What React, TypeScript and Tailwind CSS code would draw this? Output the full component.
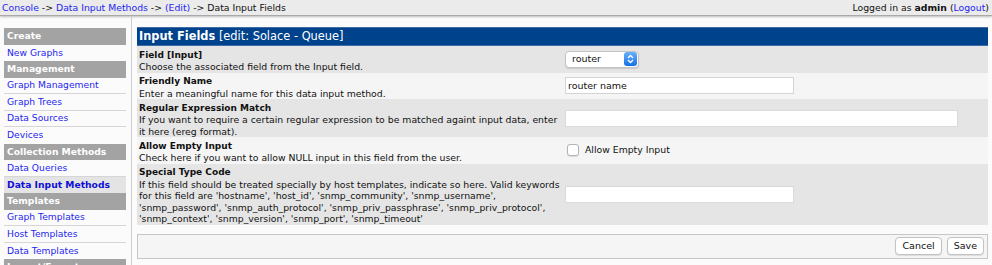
const MENU: { title: string; items: { label: string; active?: boolean }[] }[] = [
  { title: "Create", items: [{ label: "New Graphs" }] },
  {
    title: "Management",
    items: [
      { label: "Graph Management" },
      { label: "Graph Trees" },
      { label: "Data Sources" },
      { label: "Devices" },
    ],
  },
  {
    title: "Collection Methods",
    items: [{ label: "Data Queries" }, { label: "Data Input Methods", active: true }],
  },
  {
    title: "Templates",
    items: [
      { label: "Graph Templates" },
      { label: "Host Templates" },
      { label: "Data Templates" },
    ],
  },
  { title: "Import/Export", items: [{ label: "Import Templates" }, { label: "Export Templates" }] },
];

function Row({
  title,
  desc,
  dark,
  children,
}: {
  title: string;
  desc: string;
  dark?: boolean;
  children: React.ReactNode;
}) {
  return (
    <div className={`flex ${dark ? "bg-[#e5e5e5]" : "bg-[#f5f5f5]"}`}>
      <div className="w-[426px] shrink-0 px-[2px] pt-[3.5px] leading-[11.5px]">
        <div className="font-bold">{title}</div>
        <div className="text-[9.3px]">{desc}</div>
      </div>
      <div className="flex flex-1 items-center pl-[2px]">{children}</div>
    </div>
  );
}

export default function App() {
  return (
    <div className="h-[265px] overflow-hidden bg-[#fbfbfb] font-['DejaVu_Sans',sans-serif] text-[9px] text-[#111]">
      {/* top bar */}
      <div className="flex h-[16px] items-center justify-between border-b border-[#a9a9a9] bg-[#ebebeb] pl-[2px] pr-[3px] text-[9.3px] shadow-[0_1px_2px_rgba(0,0,0,0.25)]">
        <div>
          <a className="text-[#1f1ff0]">Console</a> -&gt;{" "}
          <a className="text-[#1f1ff0]">Data Input Methods</a> -&gt;{" "}
          <a className="text-[#1f1ff0]">(Edit)</a> -&gt; Data Input Fields
        </div>
        <div>
          Logged in as <b>admin</b> (<a className="text-[#1f1ff0]">Logout</a>)
        </div>
      </div>

      <div className="flex">
        {/* sidebar */}
        <div className="w-[132px] shrink-0 border-r border-[#cccccc] pl-[4px] pr-[5px] pt-[12px] text-[9.2px]">
          {MENU.map((g) => (
            <div key={g.title}>
              <div className="flex h-[16.5px] items-center bg-[#a3a3a3] px-[3px] font-bold text-white">
                {g.title}
              </div>
              {g.items.map((it, i) => (
                <div
                  key={it.label}
                  className={`flex h-[16.5px] items-center px-[3px] ${
                    i < g.items.length - 1 ? "border-b border-[#d6d6d6]" : ""
                  } ${it.active ? "bg-[#e4e4e4] font-bold text-[#1010d8]" : "text-[#1f1ff0]"}`}
                >
                  {it.label}
                </div>
              ))}
            </div>
          ))}
        </div>

        {/* main */}
        <div className="ml-[5px] w-[851px] shrink-0 pt-[11px]">
          <div className="flex h-[19px] items-center border-y border-[#3e6aa6] bg-[#00428c] px-[2px] text-[11.4px] text-white">
            <span className="font-bold">Input Fields</span>
            <span>&nbsp;[edit: Solace - Queue]</span>
          </div>

          <Row dark title="Field [Input]" desc="Choose the associated field from the Input field.">
            <div className="flex h-[17px] w-[74px] items-center justify-between rounded-[4px] border border-[#c4c4c4] bg-white pl-[6px] pr-px shadow-[0_1px_1px_rgba(0,0,0,0.12)]">
              <span className="text-[9.5px]">router</span>
              <span className="flex h-[14px] w-[13px] items-center justify-center rounded-[3px] bg-gradient-to-b from-[#69b1fa] to-[#0d6fe6]">
                <svg width="7" height="10" viewBox="0 0 7 10" fill="none" stroke="white" strokeWidth="1.3">
                  <path d="M1 4 L3.5 1.5 L6 4" />
                  <path d="M1 6 L3.5 8.5 L6 6" />
                </svg>
              </span>
            </div>
          </Row>

          <Row title="Friendly Name" desc="Enter a meaningful name for this data input method.">
            <div className="flex h-[17px] w-[229px] items-center border border-[#d4d4d4] bg-white px-[2px] text-[9.5px]">
              router name
            </div>
          </Row>

          <Row
            dark
            title="Regular Expression Match"
            desc="If you want to require a certain regular expression to be matched againt input data, enter it here (ereg format)."
          >
            <div className="h-[17px] w-[393px] border border-[#dadada] bg-white" />
          </Row>

          <Row title="Allow Empty Input" desc="Check here if you want to allow NULL input in this field from the user.">
            <div className="flex items-center gap-[6px] pl-[2px] text-[9.3px]">
              <span className="h-[12px] w-[12px] rounded-[3px] border border-[#b4b4b4] bg-white shadow-[0_1px_1px_rgba(0,0,0,0.1)]" />
              Allow Empty Input
            </div>
          </Row>

          <Row
            dark
            title="Special Type Code"
            desc="If this field should be treated specially by host templates, indicate so here. Valid keywords for this field are 'hostname', 'host_id', 'snmp_community', 'snmp_username', 'snmp_password', 'snmp_auth_protocol', 'snmp_priv_passphrase', 'snmp_priv_protocol', 'snmp_context', 'snmp_version', 'snmp_port', 'snmp_timeout'"
          >
            <div className="h-[17px] w-[229px] border border-[#dadada] bg-white" />
          </Row>

          <div className="mt-[9px] flex h-[25px] items-center justify-end gap-[5px] border border-[#c6c6c6] bg-[#f5f5f5] pr-[3px] text-[9.5px]">
            <button className="h-[18px] rounded-[4px] border border-[#c2c2c2] bg-white px-[6px] shadow-[0_1px_1px_rgba(0,0,0,0.1)]">
              Cancel
            </button>
            <button className="h-[18px] rounded-[4px] border border-[#c2c2c2] bg-white px-[6px] shadow-[0_1px_1px_rgba(0,0,0,0.1)]">
              Save
            </button>
          </div>
        </div>
      </div>
    </div>
  );
}
